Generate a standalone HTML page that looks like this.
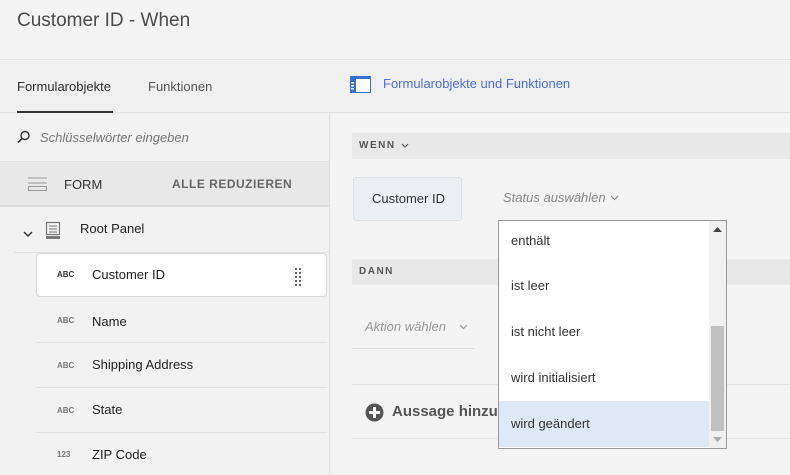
<!DOCTYPE html>
<html><head><meta charset="utf-8"><style>
*{box-sizing:border-box;margin:0;padding:0}
body{width:790px;height:475px;overflow:hidden;background:#f2f2f2;font-family:"Liberation Sans",sans-serif;color:#2c2c2c;position:relative}
.a{position:absolute;white-space:nowrap}
.l{position:absolute;height:1px;background:#e1e1e1}
.abc{position:absolute;font-size:8px;font-weight:bold;color:#777;left:57px}
.it{position:absolute;left:92px;font-size:13px;color:#222}
.dd{position:absolute;left:12px;font-size:13px;color:#333}
</style></head><body>
<div class="a" style="left:0;top:0;width:790px;height:60px;background:#f4f4f4;border-bottom:1px solid #e6e6e6"></div>
<div class="a" style="left:17px;top:10px;font-size:19px;color:#4b4b4b">Customer ID - When</div>
<div class="a" style="left:0;top:61px;width:790px;height:52px;background:#f0f0f0;border-bottom:1px solid #e2e2e2"></div>
<div class="a" style="left:17px;top:79px;font-size:13px;color:#2c2c2c">Formularobjekte</div>
<div class="a" style="left:17px;top:111px;width:96px;height:2px;background:#333"></div>
<div class="a" style="left:148px;top:79px;font-size:13px;color:#555">Funktionen</div>
<svg class="a" style="left:350px;top:76px" width="21" height="17"><rect x="0.5" y="0.5" width="20" height="16" fill="#fff" stroke="#3a6fd0"/><rect x="0" y="0" width="21" height="3" fill="#3a6fd0"/><rect x="0" y="0" width="6" height="17" fill="#3a6fd0"/><rect x="1" y="6" width="3" height="1.5" fill="#fff"/><rect x="1" y="9" width="3" height="1.5" fill="#fff"/><rect x="1" y="12" width="3" height="1.5" fill="#fff"/></svg>
<div class="a" style="left:383px;top:76px;font-size:13px;color:#4a6ed6">Formularobjekte und Funktionen</div>
<div class="a" style="left:0;top:114px;width:330px;height:361px;background:#f2f2f2;border-right:1px solid #e2e2e2"></div>
<svg class="a" style="left:17px;top:130px" width="14" height="14"><circle cx="8" cy="5.5" r="4" fill="none" stroke="#333" stroke-width="1.4"/><line x1="5" y1="8.5" x2="1" y2="12.5" stroke="#333" stroke-width="1.6"/></svg>
<div class="a" style="left:40px;top:130px;font-size:13px;font-style:italic;color:#777">Schlüsselwörter eingeben</div>
<div class="a" style="left:0;top:161px;width:329px;height:46px;background:#e8e8e8;border-bottom:2px solid #dcdcdc;border-top:1px solid #e2e2e2"></div>
<svg class="a" style="left:28px;top:177px" width="20" height="14"><line x1="0" y1="1" x2="19" y2="1" stroke="#999"/><line x1="0" y1="6" x2="19" y2="6" stroke="#999"/><rect x="0.5" y="9.5" width="18" height="4" fill="none" stroke="#999"/></svg>
<div class="a" style="left:64px;top:177px;font-size:13px;color:#333">FORM</div>
<div class="a" style="left:172px;top:177px;font-size:12px;font-weight:bold;letter-spacing:0.5px;color:#666">ALLE REDUZIEREN</div>
<svg class="a" style="left:23px;top:230px" width="10" height="8"><path d="M1 2 L5 6 L9 2" fill="none" stroke="#333" stroke-width="1.5"/></svg>
<svg class="a" style="left:45px;top:221px" width="16" height="18"><rect x="1.5" y="1.5" width="13" height="12" fill="none" stroke="#777" stroke-width="1.2"/><line x1="4" y1="5" x2="12" y2="5" stroke="#777"/><line x1="4" y1="8" x2="12" y2="8" stroke="#777"/><line x1="4" y1="11" x2="12" y2="11" stroke="#777"/><rect x="1" y="15" width="14" height="3" fill="#777"/></svg>
<div class="a" style="left:80px;top:221px;font-size:13px;color:#222">Root Panel</div>
<div class="l" style="left:14px;top:252px;width:316px"></div>
<div class="a" style="left:36px;top:253px;width:291px;height:44px;background:#fff;border:1px solid #d8d8d8;border-radius:4px"></div>
<div class="abc" style="top:270px;color:#333">ABC</div>
<div class="it" style="top:267px">Customer ID</div>
<svg class="a" style="left:294px;top:267px" width="10" height="20"><g fill="#333"><circle cx="2" cy="2" r="1"/><circle cx="6" cy="2" r="1"/><circle cx="2" cy="6" r="1"/><circle cx="6" cy="6" r="1"/><circle cx="2" cy="10" r="1"/><circle cx="6" cy="10" r="1"/><circle cx="2" cy="14" r="1"/><circle cx="6" cy="14" r="1"/><circle cx="2" cy="18" r="1"/><circle cx="6" cy="18" r="1"/></g></svg>
<div class="abc" style="top:316px">ABC</div><div class="it" style="top:314px">Name</div>
<div class="l" style="left:36px;top:342px;width:291px"></div>
<div class="abc" style="top:361px">ABC</div><div class="it" style="top:357px">Shipping Address</div>
<div class="l" style="left:36px;top:387px;width:291px"></div>
<div class="abc" style="top:406px">ABC</div><div class="it" style="top:402px">State</div>
<div class="l" style="left:36px;top:432px;width:291px"></div>
<div class="abc" style="top:450px">123</div><div class="it" style="top:447px">ZIP Code</div>
<div class="a" style="left:331px;top:114px;width:459px;height:361px;background:#f4f4f4"></div>
<div class="a" style="left:352px;top:133px;width:438px;height:26px;background:#e8e8e8"></div>
<div class="a" style="left:359px;top:140px;font-size:10px;font-weight:bold;letter-spacing:1.5px;color:#555">WENN</div>
<svg class="a" style="left:401px;top:143px" width="8" height="6"><path d="M1 1 L4 4 L7 1" fill="none" stroke="#555" stroke-width="1.2"/></svg>
<div class="a" style="left:353px;top:177px;width:109px;height:44px;background:#eceff4;border:1px solid #dde0e5;border-radius:3px"></div>
<div class="a" style="left:372px;top:191px;font-size:13px;color:#333">Customer ID</div>
<div class="a" style="left:503px;top:190px;font-size:13px;font-style:italic;color:#888">Status auswählen</div>
<svg class="a" style="left:610px;top:195px" width="9" height="6"><path d="M1 1 L4.5 4.5 L8 1" fill="none" stroke="#888" stroke-width="1.2"/></svg>
<div class="a" style="left:352px;top:259px;width:438px;height:26px;background:#e8e8e8"></div>
<div class="a" style="left:359px;top:266px;font-size:10px;font-weight:bold;letter-spacing:1.5px;color:#555">DANN</div>
<div class="a" style="left:365px;top:319px;font-size:13px;font-style:italic;color:#999">Aktion wählen</div>
<svg class="a" style="left:459px;top:324px" width="9" height="6"><path d="M1 1 L4.5 4.5 L8 1" fill="none" stroke="#999" stroke-width="1.2"/></svg>
<div class="a" style="left:352px;top:348px;width:123px;height:1px;background:#ddd"></div>
<div class="a" style="left:352px;top:384px;width:438px;height:1px;background:#e4e4e4"></div>
<svg class="a" style="left:365px;top:403px" width="19" height="19"><circle cx="9.5" cy="9.5" r="9" fill="#555"/><rect x="8" y="4" width="3" height="11" fill="#fff"/><rect x="4" y="8" width="11" height="3" fill="#fff"/></svg>
<div class="a" style="left:392px;top:403px;font-size:15px;font-weight:bold;color:#555">Aussage hinzufügen</div>
<div class="a" style="left:352px;top:438px;width:438px;height:1px;background:#e4e4e4"></div>
<div class="a" style="left:498px;top:220px;width:229px;height:229px;background:#fff;border:1px solid #999;overflow:hidden">
<div class="a" style="left:0;top:180px;width:210px;height:46px;background:#dfe8f5"></div>
<div class="dd" style="top:12px">enthält</div>
<div class="dd" style="top:57px">ist leer</div>
<div class="dd" style="top:103px">ist nicht leer</div>
<div class="dd" style="top:149px">wird initialisiert</div>
<div class="dd" style="top:195px">wird geändert</div>
<div class="a" style="left:210px;top:0;width:17px;height:227px;background:#f0f0f0"></div>
<div class="a" style="left:212px;top:105px;width:13px;height:105px;background:#c0c0c0"></div>
<svg class="a" style="left:214px;top:6px" width="9" height="6"><path d="M0 5 L4.5 0 L9 5Z" fill="#444"/></svg>
<svg class="a" style="left:214px;top:216px" width="9" height="6"><path d="M0 0 L4.5 5 L9 0Z" fill="#aaa"/></svg>
</div>
</body></html>
